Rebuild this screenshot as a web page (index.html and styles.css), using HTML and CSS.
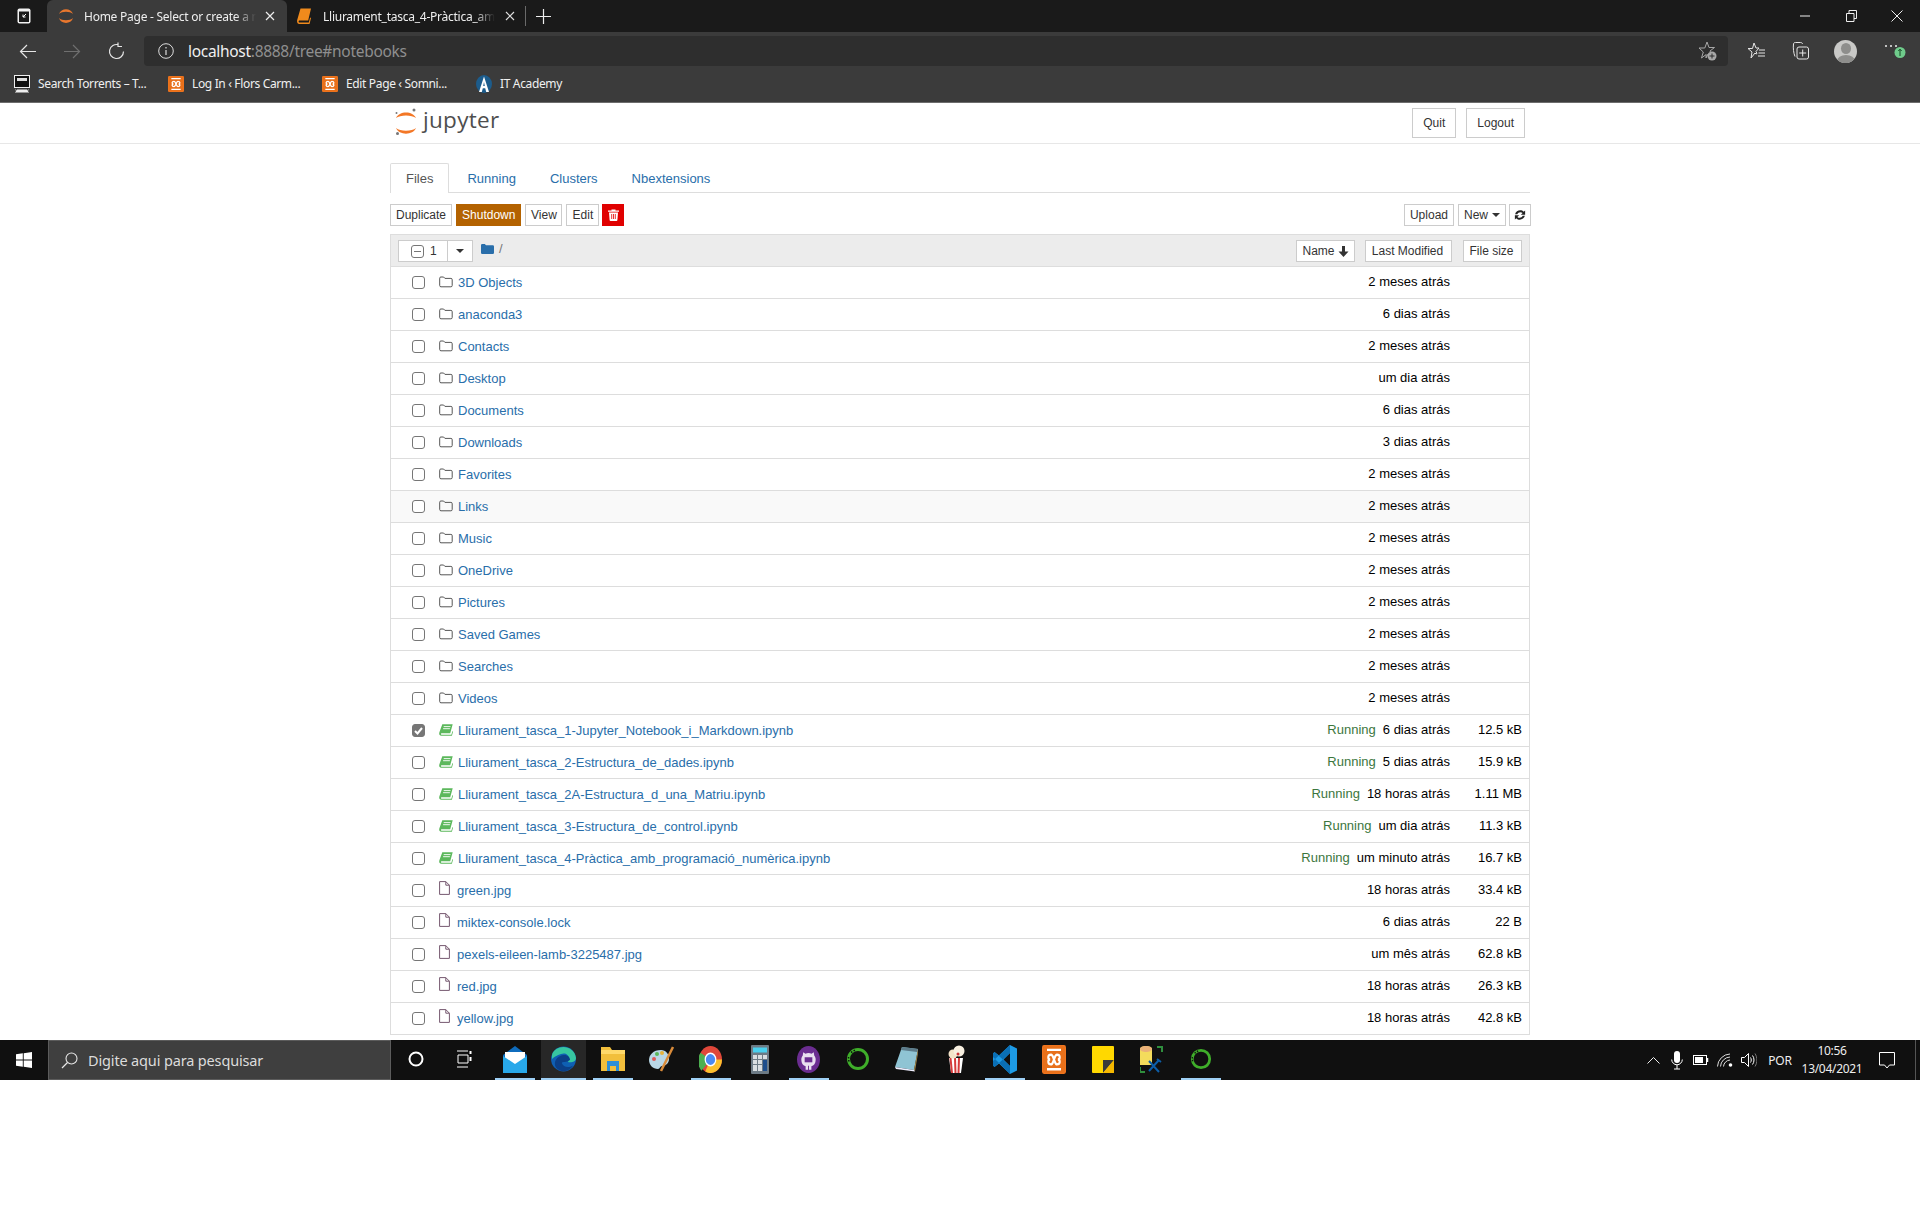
FILE: index.html
```html
<!DOCTYPE html>
<html lang="pt">
<head>
<meta charset="utf-8">
<title>Home Page - Select or create a notebook</title>
<link rel="stylesheet" href="styles.css">
</head>
<body>
<svg class="defs" width="0" height="0" aria-hidden="true">
  <symbol id="folder" viewBox="0 0 14 12"><path d="M.7 2.2a1.2 1.2 0 0 1 1.2-1.2h2.7l1.3 1.4h6a1.3 1.3 0 0 1 1.3 1.3v5.8a1.3 1.3 0 0 1-1.3 1.3H2a1.3 1.3 0 0 1-1.3-1.3z" fill="none" stroke="#555" stroke-width="1"/></symbol>
  <symbol id="book" viewBox="0 0 14 12"><path d="M3.3.3h10.4l-2.5 8.9H2.6c-.9 0-.9 1.5 0 1.5h9.8l1-3.6.6.6-1.1 4H2.2C.5 11.7-.2 10 .4 8.200z" fill="#5cb85c"/><path d="M4.700 2.600h6.800M4.100 4.700h6.800" stroke="#fff" stroke-width=".9"/></symbol>
  <symbol id="file" viewBox="0 0 11 14"><path d="M.6.600h6.200l3.600 3.600v9.200H.6zM6.800.600v3.600h3.600" fill="none" stroke="#75586f" stroke-width="1"/></symbol>
  <symbol id="xampp" viewBox="0 0 24 24"><rect width="24" height="24" rx="2" fill="#f0741e"/><rect x="1" y="1" width="22" height="22" rx="1.500" fill="#e8701a"/><path d="M5 4h14M5 20h14" stroke="#fff" stroke-width="2"/><path d="M9 8c-3.500 0-3.500 3.500-1 4-2.500.5-2.500 4 1 4 2 0 2-2.500 3-4 1 1.500 1 4 3 4 3.500 0 3.500-3.500 1-4 2.500-.5 2.500-4-1-4-2 0-2 2.500-3 4-1-1.500-1-4-3-4z" fill="none" stroke="#fff" stroke-width="2"/></symbol>
  <symbol id="ring" viewBox="0 0 24 24"><circle cx="12" cy="12" r="9.500" fill="none" stroke="#3fae2a" stroke-width="3"/><path d="M5 5.500l5-3M2.500 10l.5 6" stroke="#101010" stroke-width="1.500" stroke-dasharray="1.500 1.500"/></symbol>
</svg>

<div class="screen">
  <header class="browser">
    <div class="tabbar">
      <div class="tab-actions">
        <svg width="14" height="16" viewBox="0 0 14 16"><rect x=".5" y=".5" width="13" height="15" rx="2" fill="#f2f2f2"/><rect x="2" y="3.500" width="10" height="10.500" fill="#1a1a1a"/><path d="M9 6l-3 3m0-2.500V9h2.500" stroke="#fff" fill="none"/></svg>
      </div>
      <div class="tab tab-active">
        <svg class="tab-icon" width="16" height="20" viewBox="0 0 16 20"><path d="M1 8C3 1.500 13 1.500 15 8 12 5 4 5 1 8zM1 12C3 18.500 13 18.500 15 12 12 15 4 15 1 12z" fill="#e8772e"/></svg>
        <span class="tab-title">Home Page - Select or create a n</span>
        <svg class="tab-close" width="10" height="10" viewBox="0 0 10 10"><path d="M1 1l8 8M9 1l-8 8" stroke="#eee" stroke-width="1.200"/></svg>
      </div>
      <div class="tab">
        <svg class="tab-icon" width="14" height="16" viewBox="0 0 14 16"><path d="M3.500.5H14l-2.800 12H2.600c-1.300 0-1.300 2 0 2h9.200l1.300-5 .9.500-1.500 6H2.300C.5 16-.3 14 .2 12z" fill="#f08a1c"/></svg>
        <span class="tab-title tab-title-second">Lliurament_tasca_4-Pràctica_amb</span>
        <svg class="tab-close" width="10" height="10" viewBox="0 0 10 10"><path d="M1 1l8 8M9 1l-8 8" stroke="#ddd" stroke-width="1.200"/></svg>
      </div>
      <span class="tab-sep"></span>
      <svg class="tab-plus" width="15" height="15" viewBox="0 0 15 15"><path d="M7.500 0v15M0 7.500h15" stroke="#eee" stroke-width="1.200"/></svg>
      <div class="win-controls">
        <span class="win-slot"><svg width="10" height="2" viewBox="0 0 10 2"><path d="M0 1h10" stroke="#eee"/></svg></span>
        <span class="win-slot"><svg width="11" height="12" viewBox="0 0 11 12"><path d="M.5 3.500h7.500v8H.5zM3 3.500V.5h7.500v8H8" fill="none" stroke="#eee"/></svg></span>
        <span class="win-slot"><svg width="12" height="12" viewBox="0 0 12 12"><path d="M.5.500l11 11M11.500.5l-11 11" stroke="#eee"/></svg></span>
      </div>
    </div>

    <div class="toolbar">
      <span class="nav-slot"><svg width="18" height="15" viewBox="0 0 18 15"><path d="M17 7.500H1.500M8 1L1.500 7.500 8 14" fill="none" stroke="#e6e6e6" stroke-width="1.200"/></svg></span>
      <span class="nav-slot"><svg width="18" height="15" viewBox="0 0 18 15"><path d="M1 7.500h15.500M10 1l6.500 6.500L10 14" fill="none" stroke="#6f6f6f" stroke-width="1.200"/></svg></span>
      <span class="nav-slot"><svg width="17" height="18" viewBox="0 0 17 18"><path d="M10.500 2.800A7 7 0 1 0 15.500 9.500M10 .5v4h4" fill="none" stroke="#e6e6e6" stroke-width="1.200"/></svg></span>
      <div class="address">
        <svg width="16" height="16" viewBox="0 0 16 16"><circle cx="8" cy="8" r="7.300" fill="none" stroke="#ddd"/><path d="M8 7v5M8 4v1.500" stroke="#ddd" stroke-width="1.200"/></svg>
        <span class="url"><span class="url-host">localhost</span>:8888/tree#notebooks</span>
        <svg class="fav-add" width="18" height="20" viewBox="0 0 18 20"><path d="M8 1l2 5.500h5.500L11 10l1 3H9l-2 4 .2-3.500L2.500 17l1.800-6L0 7h5.800z" fill="none" stroke="#a8a8a8"/><circle cx="13" cy="15" r="4.500" fill="#a8a8a8"/><path d="M13 12.500v5M10.500 15h5" stroke="#2e2e2e"/></svg>
      </div>
      <span class="tool-slot"><svg width="18" height="18" viewBox="0 0 18 18"><path d="M7 1l2 5h3l-3 3.500 1 2-1 .5-1-1-4 5 1-6-4-3.500h4.500zM12 8h6M11.500 11H18M11 14h7" fill="none" stroke="#e6e6e6"/></svg></span>
      <span class="tool-slot"><svg width="17" height="18" viewBox="0 0 17 18"><path d="M3 14.500C1.500 11 1 6 1.500 2c0-1 .8-1.500 2-1.500h5c1 0 2 .5 2 1.500" fill="none" stroke="#e6e6e6"/><rect x="5" y="5" width="11.500" height="12" rx="2" fill="#3b3b3b" stroke="#e6e6e6"/><path d="M10.700 7.500v7M7.200 11h7" stroke="#e6e6e6"/></svg></span>
      <span class="tool-slot"><span class="avatar"><span class="avatar-head"></span><span class="avatar-body"></span></span></span>
      <span class="tool-slot"><svg class="more" width="24" height="20" viewBox="0 0 24 20"><path d="M1 5h2M6 5h2M11 5h2" stroke="#eee" stroke-width="1.500"/><circle cx="16" cy="11.500" r="5.500" fill="#6fcb8b"/><path d="M16 15V8.500M14.300 10l1.700-1.800 1.700 1.800" stroke="#0e3d1c" fill="none" stroke-width=".9"/></svg></span>
    </div>

    <nav class="bookmarks">
      <span class="bm"><svg width="16" height="18" viewBox="0 0 16 18"><rect x=".5" y=".5" width="15" height="12" fill="#111" stroke="#eee"/><rect x="3" y="3" width="10" height="3" fill="#ddd"/><path d="M1 14.500h14v3H1z" fill="#eee"/><path d="M3 13l-2 4M13 13l2 4" stroke="#333"/></svg><span class="bm-text">Search Torrents – T...</span></span>
      <span class="bm"><svg width="16" height="16"><use href="#xampp"/></svg><span class="bm-text">Log In ‹ Flors Carm...</span></span>
      <span class="bm"><svg width="16" height="16"><use href="#xampp"/></svg><span class="bm-text">Edit Page ‹ Somni...</span></span>
      <span class="bm"><svg width="16" height="18" viewBox="0 0 16 18"><ellipse cx="8" cy="9" rx="8" ry="9" fill="#1c5c8c"/><path d="M8 1.500L3 17h2.800l1-3.800h2.400l1 3.800H13zM7.200 11L8 7l.8 4z" fill="#fff" fill-rule="evenodd"/></svg><span class="bm-text">IT Academy</span></span>
    </nav>
  </header>

  <main class="jupyter">
    <div class="jp-header">
      <div class="jp-inner jp-header-row">
        <div class="logo">
          <svg width="22" height="28" viewBox="0 0 22 28"><path d="M1 11C4 3.500 18 3.500 21 11 17 7.500 5 7.500 1 11zM1 21C4 28.500 18 28.500 21 21 17 24.500 5 24.500 1 21z" fill="#f37726"/><circle cx="19" cy="3" r="1.500" fill="#767677"/><circle cx="1.500" cy="6" r="1" fill="#767677"/><circle cx="2.500" cy="26.500" r="1.500" fill="#767677"/></svg>
          <span class="logo-text">jupyter</span>
        </div>
        <div class="jp-header-btns">
          <span class="btn btn-head">Quit</span>
          <span class="btn btn-head">Logout</span>
        </div>
      </div>
    </div>

    <div class="jp-inner">
      <ul class="tabs">
        <li class="jp-tab jp-tab-active">Files</li>
        <li class="jp-tab">Running</li>
        <li class="jp-tab">Clusters</li>
        <li class="jp-tab">Nbextensions</li>
      </ul>

      <div class="actions">
        <span class="btn">Duplicate</span>
        <span class="btn btn-shutdown">Shutdown</span>
        <span class="btn btn-view">View</span>
        <span class="btn btn-edit">Edit</span>
        <span class="btn btn-trash"><svg width="11" height="12" viewBox="0 0 11 12"><path d="M3.500 1.500V.5h4v1H11v1.300H0V1.500zM1 3.500h9l-.6 7.500a1 1 0 0 1-1 1H2.600a1 1 0 0 1-1-1z" fill="#fff"/><path d="M3.700 5v5M5.500 5v5M7.300 5v5" stroke="#e60000" stroke-width=".8"/></svg></span>
        <span class="actions-right">
          <span class="btn">Upload</span>
          <span class="btn">New <i class="caret"></i></span>
          <span class="btn btn-refresh"><svg width="12" height="12" viewBox="0 0 11 11"><path d="M1 4.700C1.800 1.300 6.500 0 8.900 2.600L10.200 1.300V5.200H6.300L7.900 3.700C6.500 2.300 3.700 2.700 3 4.700zM10 6.300C9.200 9.700 4.500 11 2.100 8.400L.8 9.700V5.800h3.900L3.100 7.300C4.500 8.700 7.300 8.300 8 6.300z" fill="#222"/></svg></span>
        </span>
      </div>

      <div class="list">
        <div class="list-head">
          <div class="select-group">
            <span class="select-main"><span class="minus-box"></span><span>1</span></span>
            <span class="select-drop"><i class="caret"></i></span>
          </div>
          <svg class="crumb-folder" width="13" height="10" viewBox="0 0 13 10"><path d="M0 1.200A1.200 1.200 0 0 1 1.200 0h2.600l1.200 1.300h6.800A1.200 1.200 0 0 1 13 2.500v6.300A1.200 1.200 0 0 1 11.800 10H1.200A1.200 1.200 0 0 1 0 8.800z" fill="#296eaa"/></svg>
          <span class="crumb-sep">/</span>
          <div class="sort-btns">
            <span class="btn">Name <svg width="11" height="11" viewBox="0 0 11 11"><path d="M4 0h3v5.500h3.500L5.500 11 .5 5.500H4z" fill="#333"/></svg></span>
            <span class="btn">Last Modified</span>
            <span class="btn">File size</span>
          </div>
        </div>

        <div class="row"><span class="check"></span><svg class="ico-folder"><use href="#folder"/></svg><span class="name">3D Objects</span><span class="date">2 meses atrás</span><span class="size"></span></div>
        <div class="row"><span class="check"></span><svg class="ico-folder"><use href="#folder"/></svg><span class="name">anaconda3</span><span class="date">6 dias atrás</span><span class="size"></span></div>
        <div class="row"><span class="check"></span><svg class="ico-folder"><use href="#folder"/></svg><span class="name">Contacts</span><span class="date">2 meses atrás</span><span class="size"></span></div>
        <div class="row"><span class="check"></span><svg class="ico-folder"><use href="#folder"/></svg><span class="name">Desktop</span><span class="date">um dia atrás</span><span class="size"></span></div>
        <div class="row"><span class="check"></span><svg class="ico-folder"><use href="#folder"/></svg><span class="name">Documents</span><span class="date">6 dias atrás</span><span class="size"></span></div>
        <div class="row"><span class="check"></span><svg class="ico-folder"><use href="#folder"/></svg><span class="name">Downloads</span><span class="date">3 dias atrás</span><span class="size"></span></div>
        <div class="row"><span class="check"></span><svg class="ico-folder"><use href="#folder"/></svg><span class="name">Favorites</span><span class="date">2 meses atrás</span><span class="size"></span></div>
        <div class="row row-hover"><span class="check"></span><svg class="ico-folder"><use href="#folder"/></svg><span class="name">Links</span><span class="date">2 meses atrás</span><span class="size"></span></div>
        <div class="row"><span class="check"></span><svg class="ico-folder"><use href="#folder"/></svg><span class="name">Music</span><span class="date">2 meses atrás</span><span class="size"></span></div>
        <div class="row"><span class="check"></span><svg class="ico-folder"><use href="#folder"/></svg><span class="name">OneDrive</span><span class="date">2 meses atrás</span><span class="size"></span></div>
        <div class="row"><span class="check"></span><svg class="ico-folder"><use href="#folder"/></svg><span class="name">Pictures</span><span class="date">2 meses atrás</span><span class="size"></span></div>
        <div class="row"><span class="check"></span><svg class="ico-folder"><use href="#folder"/></svg><span class="name">Saved Games</span><span class="date">2 meses atrás</span><span class="size"></span></div>
        <div class="row"><span class="check"></span><svg class="ico-folder"><use href="#folder"/></svg><span class="name">Searches</span><span class="date">2 meses atrás</span><span class="size"></span></div>
        <div class="row"><span class="check"></span><svg class="ico-folder"><use href="#folder"/></svg><span class="name">Videos</span><span class="date">2 meses atrás</span><span class="size"></span></div>
        <div class="row"><span class="check check-on"><svg width="9" height="8" viewBox="0 0 9 8"><path d="M1 4l2.500 2.500L8 1" fill="none" stroke="#fff" stroke-width="2"/></svg></span><svg class="ico-folder"><use href="#book"/></svg><span class="name">Lliurament_tasca_1-Jupyter_Notebook_i_Markdown.ipynb</span><span class="running">Running</span><span class="date">6 dias atrás</span><span class="size">12.5 kB</span></div>
        <div class="row"><span class="check"></span><svg class="ico-folder"><use href="#book"/></svg><span class="name">Lliurament_tasca_2-Estructura_de_dades.ipynb</span><span class="running">Running</span><span class="date">5 dias atrás</span><span class="size">15.9 kB</span></div>
        <div class="row"><span class="check"></span><svg class="ico-folder"><use href="#book"/></svg><span class="name">Lliurament_tasca_2A-Estructura_d_una_Matriu.ipynb</span><span class="running">Running</span><span class="date">18 horas atrás</span><span class="size">1.11 MB</span></div>
        <div class="row"><span class="check"></span><svg class="ico-folder"><use href="#book"/></svg><span class="name">Lliurament_tasca_3-Estructura_de_control.ipynb</span><span class="running">Running</span><span class="date">um dia atrás</span><span class="size">11.3 kB</span></div>
        <div class="row"><span class="check"></span><svg class="ico-folder"><use href="#book"/></svg><span class="name">Lliurament_tasca_4-Pràctica_amb_programació_numèrica.ipynb</span><span class="running">Running</span><span class="date">um minuto atrás</span><span class="size">16.7 kB</span></div>
        <div class="row"><span class="check"></span><svg class="ico-file"><use href="#file"/></svg><span class="name name-file">green.jpg</span><span class="date">18 horas atrás</span><span class="size">33.4 kB</span></div>
        <div class="row"><span class="check"></span><svg class="ico-file"><use href="#file"/></svg><span class="name name-file">miktex-console.lock</span><span class="date">6 dias atrás</span><span class="size">22 B</span></div>
        <div class="row"><span class="check"></span><svg class="ico-file"><use href="#file"/></svg><span class="name name-file">pexels-eileen-lamb-3225487.jpg</span><span class="date">um mês atrás</span><span class="size">62.8 kB</span></div>
        <div class="row"><span class="check"></span><svg class="ico-file"><use href="#file"/></svg><span class="name name-file">red.jpg</span><span class="date">18 horas atrás</span><span class="size">26.3 kB</span></div>
        <div class="row"><span class="check"></span><svg class="ico-file"><use href="#file"/></svg><span class="name name-file">yellow.jpg</span><span class="date">18 horas atrás</span><span class="size">42.8 kB</span></div>
      </div>
    </div>
  </main>

  <footer class="taskbar">
    <span class="start"><svg width="16" height="16" viewBox="0 0 16 16"><path d="M0 2.300L6.800 1.300v6.300H0zM7.700 1.200L16 0v7.600H7.700zM0 8.400h6.800v6.300L0 13.700zM7.700 8.400H16V16l-8.300-1.200z" fill="#fff"/></svg></span>
    <div class="search">
      <svg width="17" height="17" viewBox="0 0 17 17"><circle cx="10.500" cy="6.500" r="5.500" fill="none" stroke="#e6e6e6" stroke-width="1.100"/><path d="M6.500 10.500L1 16" stroke="#e6e6e6" stroke-width="1.200"/></svg>
      <span class="search-text">Digite aqui para pesquisar</span>
    </div>
    <span class="ts ts-first"><span class="ti"><svg width="16" height="16" viewBox="0 0 16 16"><circle cx="8" cy="8" r="6.500" fill="none" stroke="#fff" stroke-width="2"/></svg></span></span>
    <span class="ts ts-first"><span class="ti"><svg class="taskview" width="16" height="18" viewBox="0 0 16 18"><path d="M1 1h11M1 17h11M2 5h10v8H2z" fill="none" stroke="#fff"/><path d="M14.500 1v3M14.500 7v4" stroke="#fff" stroke-width="2"/></svg></span></span>

    <span class="ts"><span class="ti ti-open"><svg width="24" height="27" viewBox="0 0 24 27"><path d="M12 0l12 9v18H0V9z" fill="#0f6cbd"/><path d="M2 6h20v8l-10 6L2 14z" fill="#fff"/><path d="M0 10l12 8 12-8v17H0z" fill="#28a8ea"/></svg></span></span>
    <span class="ts"><span class="ti ti-open ti-active"><svg width="25" height="28" viewBox="0 0 25 28"><circle cx="12.500" cy="14" r="12.500" fill="#0f5fb3"/><path d="M1 10C4-1 23-1 25 13c0 4-5 5-8 4 3-6-2-10-7-8C6 10 3 12 1 14z" fill="#37c6a0"/><path d="M13 10c4 0 6 2.500 6 5-4 3-9 1-8 3.500 1 3 6 5 11 2-3 6-12 8-17 2-3-4 0-12 8-12.500z" fill="#0b3f87"/></svg></span></span>
    <span class="ts"><span class="ti ti-open"><svg width="24" height="24" viewBox="0 0 24 24"><path d="M0 0h9l2 3h13v21H0z" fill="#f2bf3c"/><path d="M0 3h24v4H0z" fill="#ffd96a"/><path d="M6 14h12v10h-3v-5H9v5H6z" fill="#2e8fd6"/></svg></span></span>
    <span class="ts"><span class="ti"><svg width="26" height="28" viewBox="0 0 26 28"><path d="M12 5C4 5 0 10 0 15s4 9 9 9c2 0 2-3 4-3 4 0 7-3 7-7 0-5-3-9-8-9z" fill="#b9d7e6"/><circle cx="5" cy="14" r="2" fill="#e05a5a"/><circle cx="8" cy="9" r="2" fill="#5bb85b"/><circle cx="13" cy="8" r="2" fill="#e8b23a"/><path d="M24 2L12 26" stroke="#d98b3a" stroke-width="2.500"/></svg></span></span>
    <span class="ts"><span class="ti ti-open"><svg width="23" height="27" viewBox="0 0 24 24" preserveAspectRatio="none"><circle cx="12" cy="12" r="12" fill="#e0473a"/><path d="M12 12L2.600 22A12 12 0 0 1 1.600 6z" fill="#4caf50"/><path d="M12 12h12a12 12 0 0 1-17.500 10.700z" fill="#fbc02d"/><circle cx="12" cy="12" r="5.500" fill="#4a8af4" stroke="#fff" stroke-width="1.300"/></svg></span></span>
    <span class="ts"><span class="ti"><svg width="18" height="29" viewBox="0 0 18 29"><rect width="18" height="29" rx="1" fill="#6d7b86"/><rect x="2" y="2.500" width="14" height="5" fill="#49d0ef"/><path d="M2 10h4v4H2zM7 10h4v4H7zM2 15h4v4H2zM7 15h4v4H7zM2 20h4v6H2zM7 20h4v6H7z" fill="#d9dee2"/><path d="M12 10h4v4h-4z" fill="#d9dee2"/><path d="M12 15h4v11h-4z" fill="#1e4e8c"/></svg></span></span>
    <span class="ts"><span class="ti ti-open"><svg width="23" height="27" viewBox="0 0 24 24" preserveAspectRatio="none"><circle cx="12" cy="12" r="12" fill="#6b2d91"/><path d="M6.500 5.500l2.300 1.300a9 9 0 0 1 6.400 0l2.300-1.300.5 3c1 1 1.500 2.300 1.500 3.800 0 3.300-2 5.200-4.500 5.700v3h-2.500v-3.500h-1v3.500H9v-3c-2.500-.5-4.500-2.400-4.500-5.700 0-1.500.5-2.800 1.500-3.800z" fill="#e9dff0"/><path d="M8 10h8v4.500H8z" fill="#6b2d91"/></svg></span></span>
    <span class="ts"><span class="ti"><svg width="24" height="30"><use href="#ring"/></svg></span></span>
    <span class="ts"><span class="ti"><svg width="23" height="26" viewBox="0 0 23 26"><path d="M7 1l16 2-4 21-19-3z" fill="#8fc4d4"/><path d="M7 1l16 2-1 3L6 4z" fill="#5c7b8a"/><path d="M19 24l4-21 .5 1L20 25z" fill="#a88a4a"/><path d="M0 21l19 3 1 1.500L1 23z" fill="#eef"/></svg></span></span>
    <span class="ts"><span class="ti"><svg width="18" height="28" viewBox="0 0 18 28"><path d="M2 13h14l-2 15H4z" fill="#fff"/><path d="M3.500 13l1.500 15M8 13l.5 15M12 13l-.5 15" stroke="#d63a3a" stroke-width="2"/><circle cx="6" cy="9" r="4.500" fill="#f3e3c8"/><circle cx="12" cy="6" r="5.500" fill="#f7efe0"/><circle cx="11" cy="9" r="1.500" fill="#c33"/></svg></span></span>
    <span class="ts"><span class="ti ti-open"><svg width="24" height="29" viewBox="0 0 24 29"><path d="M17 0l7 3.500v22L17 29 6 18.500 1.500 22 0 20.500v-12L1.500 7 6 10.500zM17 8l-6.500 6.500L17 21z" fill="#1d9be6" fill-rule="evenodd"/><path d="M17 0L0 16v4.500L1.500 22 17 8zM17 29L0 12V8.500L1.500 7 17 21z" fill="#0a6fb5"/></svg></span></span>
    <span class="ts"><span class="ti"><svg width="24" height="29" viewBox="0 0 24 24" preserveAspectRatio="none"><use href="#xampp"/></svg></span></span>
    <span class="ts"><span class="ti"><svg width="22" height="27" viewBox="0 0 22 27"><rect width="22" height="27" rx="1" fill="#ffd800"/><path d="M11 27V14h11z" fill="#3a3a3a"/><path d="M11 27l11-13v13z" fill="#f5b800"/></svg></span></span>
    <span class="ts"><span class="ti"><svg width="23" height="27" viewBox="0 0 23 27"><path d="M0 3c0-4 12-4 12 0v16H0z" fill="#f4dc5c"/><path d="M0 3c0-4 12-4 12 0s-12 4-12 0z" fill="#eab078"/><path d="M17 1h5v5M0 21v5h5" fill="none" stroke="#2f8f3e" stroke-width="2"/><path d="M9 15l10 11M19 14L9 25M17 13l4 3" stroke="#0d5ea8" stroke-width="2"/></svg></span></span>
    <span class="ts"><span class="ti ti-open"><svg width="22" height="28"><use href="#ring"/></svg></span></span>

    <div class="tray">
      <span class="tr"><svg width="13" height="7" viewBox="0 0 13 7"><path d="M.5 6.500l6-6 6 6" fill="none" stroke="#eee"/></svg></span>
      <span class="tr"><svg width="12" height="19" viewBox="0 0 12 19"><rect x="3" y="0" width="6" height="12" rx="3" fill="#fff"/><path d="M.7 8.500a5.300 5.300 0 0 0 10.600 0M6 14v4M3 18h6" fill="none" stroke="#fff"/></svg></span>
      <span class="tr"><svg width="16" height="10" viewBox="0 0 16 10"><rect x=".5" y=".5" width="13" height="9" fill="none" stroke="#fff"/><rect x="2" y="2" width="8" height="6" fill="#fff"/><path d="M14.500 3v4" stroke="#fff" stroke-width="1.500"/></svg></span>
      <span class="tr"><svg width="16" height="14" viewBox="0 0 16 14"><path d="M.5 13.500A13 13 0 0 1 13 1M3.500 13.500A10 10 0 0 1 13 4M6.500 13.500A7 7 0 0 1 13 7" fill="none" stroke="#ddd"/><circle cx="13.500" cy="12" r="1.800" fill="#fff"/></svg></span>
      <span class="tr"><svg width="16" height="14" viewBox="0 0 16 14"><path d="M.5 4.500h3l4-4v13l-4-4h-3zM9.500 4.500c1 1.500 1 3.500 0 5M11.500 2.500c2 2.500 2 6.500 0 9" fill="none" stroke="#fff"/><path d="M14 .5c2.500 4 2.500 9 0 13" fill="none" stroke="#777"/></svg></span>
      <span class="tr-lang">POR</span>
      <span class="tr-clock"><span>10:56</span><span>13/04/2021</span></span>
      <span class="tr-note"><svg width="16" height="17" viewBox="0 0 16 17"><path d="M.5.500h15v12.500h-5L8 16l-2.500-3H.5z" fill="none" stroke="#fff"/></svg></span>
      <span class="tr-desk"></span>
    </div>
  </footer>
  <div class="below"></div>
</div>
</body>
</html>
```

FILE: styles.css
```css
* { box-sizing: border-box; }
html, body { margin: 0; padding: 0; background: #fff; }
body { font-family: "Liberation Sans", Arial, sans-serif; font-size: 13px; color: #000; }
.defs { display: block; height: 0; }
.screen { width: 1920px; height: 1218px; display: flex; flex-direction: column; overflow: hidden; }

/* Browser chrome */
.browser { height: 103px; background: #3b3b3b; border-bottom: 1px solid #6d6d6d; color: #eee; font-family: "Noto Sans", sans-serif; flex: none; }
.tabbar { height: 32px; background: #1a1a1a; display: flex; align-items: center; }
.tab-actions { width: 47px; display: flex; justify-content: center; }
.tab { height: 32px; display: flex; align-items: center; font-size: 12px; width: 240px; }
.tab-active { background: #3b3b3b; border-radius: 6px 6px 0 0; padding-left: 11px; }
.tab-icon { flex: none; }
.tab-title { white-space: nowrap; letter-spacing: -.25px; flex: none; -webkit-mask-image: linear-gradient(to right, #000 88%, transparent 100%); mask-image: linear-gradient(to right, #000 88%, transparent 100%); }
.tab-active .tab-title { margin-left: 10px; width: 172px; }
.tab-active .tab-close { margin-left: 9px; }
.tab:not(.tab-active) { width: 233px; padding-left: 10px; }
.tab-title-second { margin-left: 12px; width: 172px; }
.tab:not(.tab-active) .tab-close { margin-left: 10px; }
.tab-sep { width: 1px; height: 20px; background: #6a6a6a; margin-left: 5px; }
.tab-plus { margin-left: 10px; }
.win-controls { margin-left: auto; display: flex; }
.win-slot { width: 46px; height: 28px; display: flex; align-items: center; justify-content: center; }

.toolbar { height: 39px; padding: 4px 7px 5px 6px; display: flex; align-items: center; }
.nav-slot { width: 44px; display: flex; justify-content: center; }
.address { flex: 1; margin: 0 5px 0 6px; height: 30px; background: #2e2e2e; border-radius: 4px; display: flex; align-items: center; padding-left: 14px; font-size: 15.500px; color: #8f8f8f; }
.url { margin-left: 14px; letter-spacing: -.3px; }
.url-host { color: #f0f0f0; }
.fav-add { margin-left: auto; margin-right: 11px; }
.tool-slot { width: 45px; display: flex; justify-content: center; align-items: center; }
.more { margin-left: 11px; }
.avatar { width: 23px; height: 23px; border-radius: 50%; background: #c9c9c7; overflow: hidden; display: flex; flex-direction: column; align-items: center; }
.avatar-head { width: 10px; height: 11px; border-radius: 50%; background: #8e8e8c; margin-top: 3px; flex: none; }
.avatar-body { width: 18px; height: 12px; border-radius: 50%; background: #8e8e8c; margin-top: 1px; flex: none; }

.bookmarks { height: 31px; display: flex; align-items: center; padding: 0 0 6px 14px; font-size: 12px; }
.bm { width: 154px; display: flex; align-items: center; }
.bm svg { flex: none; }
.bm-text { margin-left: 8px; white-space: nowrap; letter-spacing: -.35px; color: #f0f0f0; }

/* Jupyter */
.jupyter { height: 937px; background: #fff; flex: none; overflow: hidden; }
.jp-inner { width: 1140px; margin-left: 390px; }
.jp-header { height: 41px; border-bottom: 1px solid #e7e7e7; }
.jp-header-row { display: flex; align-items: flex-start; }
.logo { display: flex; align-items: center; margin: 4px 0 0 5px; height: 28px; }
.logo-text { margin-left: 6px; font-family: "Open Sans", sans-serif; font-size: 22.500px; line-height: 28px; color: #4e4e4e; letter-spacing: .3px; margin-top: -3px; }
.jp-header-btns { margin-left: auto; margin-right: 5px; margin-top: 5px; display: flex; gap: 10px; }
.btn { display: inline-flex; align-items: center; justify-content: center; gap: 3px; height: 22px; padding: 0 5px; border: 1px solid #ccc; background: #fff; color: #333; font-size: 12px; white-space: nowrap; }
.btn-head { height: 30px; padding: 0 10px; }
.tabs { list-style: none; margin: 19px 0 0; padding: 0; height: 30px; display: flex; border-bottom: 1px solid #ddd; }
.jp-tab { height: 29px; padding: 0 15px; margin-right: 4px; color: #296eaa; font-size: 13px; line-height: 31px; }
.jp-tab-active { color: #555; border: 1px solid #ddd; border-bottom: 0; background: #fff; height: 30px; padding: 0 15px; margin-right: 3px; border-radius: 2px 2px 0 0; line-height: 29px; }
.actions { margin-top: 11px; display: flex; gap: 4px; width: 1141px; }
.btn-shutdown { background: #b36200; border-color: #b36200; color: #fff; }
.btn-view { width: 37px; }
.btn-edit { width: 33px; }
.btn-trash { background: #e00000; border-color: #e00000; width: 22px; padding: 0; margin-left: -1px; }
.actions-right { margin-left: auto; display: flex; gap: 4px; }
.btn-refresh { width: 22px; padding: 0; margin-left: -1px; }
.caret { display: inline-block; width: 0; height: 0; border-left: 4px solid transparent; border-right: 4px solid transparent; border-top: 4px solid #333; margin-left: 1px; }

.list { margin-top: 8px; width: 1140px; border: 1px solid #ddd; border-bottom: 0; }
.list-head { height: 32px; padding: 5px 7px 0 7px; background: #ececec; border-bottom: 1px solid #ddd; display: flex; align-items: flex-start; }
.select-group { display: flex; height: 22px; border: 1px solid #ccc; background: #fff; width: 75px; }
.select-main { width: 49px; border-right: 1px solid #ccc; display: flex; align-items: center; padding-left: 12px; gap: 6px; font-size: 12px; color: #333; }
.minus-box { width: 13px; height: 13px; border: 1px solid #767676; border-radius: 3px; background: linear-gradient(#767676,#767676) center / 7px 1px no-repeat; }
.select-drop { flex: 1; display: flex; align-items: center; justify-content: center; padding-right: 2px; }
.crumb-folder { margin: 4px 0 0 8px; }
.crumb-sep { margin: 1px 0 0 5px; color: #777; font-size: 13px; line-height: 16px; }
.sort-btns { margin-left: auto; display: flex; }
.sort-btns .btn:nth-child(1) { width: 59px; }
.sort-btns .btn:nth-child(2) { margin-left: 10px; padding: 0 2px 0 0; width: 87px; }
.sort-btns .btn:nth-child(3) { margin-left: 11px; width: 59px; padding: 0 2px 0 0; }

.row { height: 32px; border-bottom: 1px solid #ddd; display: flex; align-items: center; padding: 0 7px 0 21px; background: #fff; }
.row-hover { background: #f9f9f9; }
.check { width: 13px; height: 13px; flex: none; border: 1px solid #767676; border-radius: 3px; background: #fff; display: flex; align-items: center; justify-content: center; }
.check-on { background: #767676; }
.ico-folder { width: 14px; height: 12px; margin-left: 14px; margin-top: -2px; flex: none; }
.ico-file { width: 11px; height: 14px; margin-left: 14px; margin-top: -6px; flex: none; }
.name { margin-left: 5px; color: #296eaa; font-size: 13px; white-space: nowrap; }
.name-file { margin-left: 7px; }
.running { margin-left: auto; color: #3c763d; font-size: 13px; margin-right: 7px; margin-top: -2px; }
.date { font-size: 13px; white-space: nowrap; margin-top: -2px; }
.name + .date { margin-left: auto; }
.size { width: 72px; text-align: right; font-size: 13px; margin-top: -2px; flex: none; }

/* Taskbar */
.taskbar { height: 40px; background: #101010; display: flex; flex: none; font-family: "Noto Sans", sans-serif; color: #eee; }
.start { width: 48px; display: flex; align-items: center; justify-content: center; }
.search { width: 343px; background: #3f3f3f; border: 1px solid #5c5c5c; display: flex; align-items: center; padding-left: 12px; }
.search-text { margin-left: 10px; font-size: 14.500px; color: #dcdcdc; letter-spacing: -.15px; }
.ts { width: 49px; height: 40px; display: flex; justify-content: center; }
.ts-first { width: 49.500px; }
.taskview { margin-left: -2px; }
.ti { width: 40px; height: 40px; display: flex; align-items: center; justify-content: center; border-bottom: 2px solid transparent; }
.ti-open { border-bottom-color: #9fd0f5; }
.ti-active { width: 45px; background: #272727; }
.tray { margin-left: auto; display: flex; align-items: center; height: 40px; }
.tr { width: 24px; display: flex; justify-content: center; }
.tr-lang { width: 38px; text-align: center; font-size: 12px; letter-spacing: -.2px; }
.tr-clock { width: 66px; display: flex; flex-direction: column; align-items: center; font-size: 12px; line-height: 18px; letter-spacing: -.3px; }
.tr-note { width: 44px; display: flex; justify-content: center; }
.tr-desk { width: 5px; height: 40px; border-left: 1px solid #555; margin-left: 6px; }
.below { flex: 1; background: #fff; }
```
